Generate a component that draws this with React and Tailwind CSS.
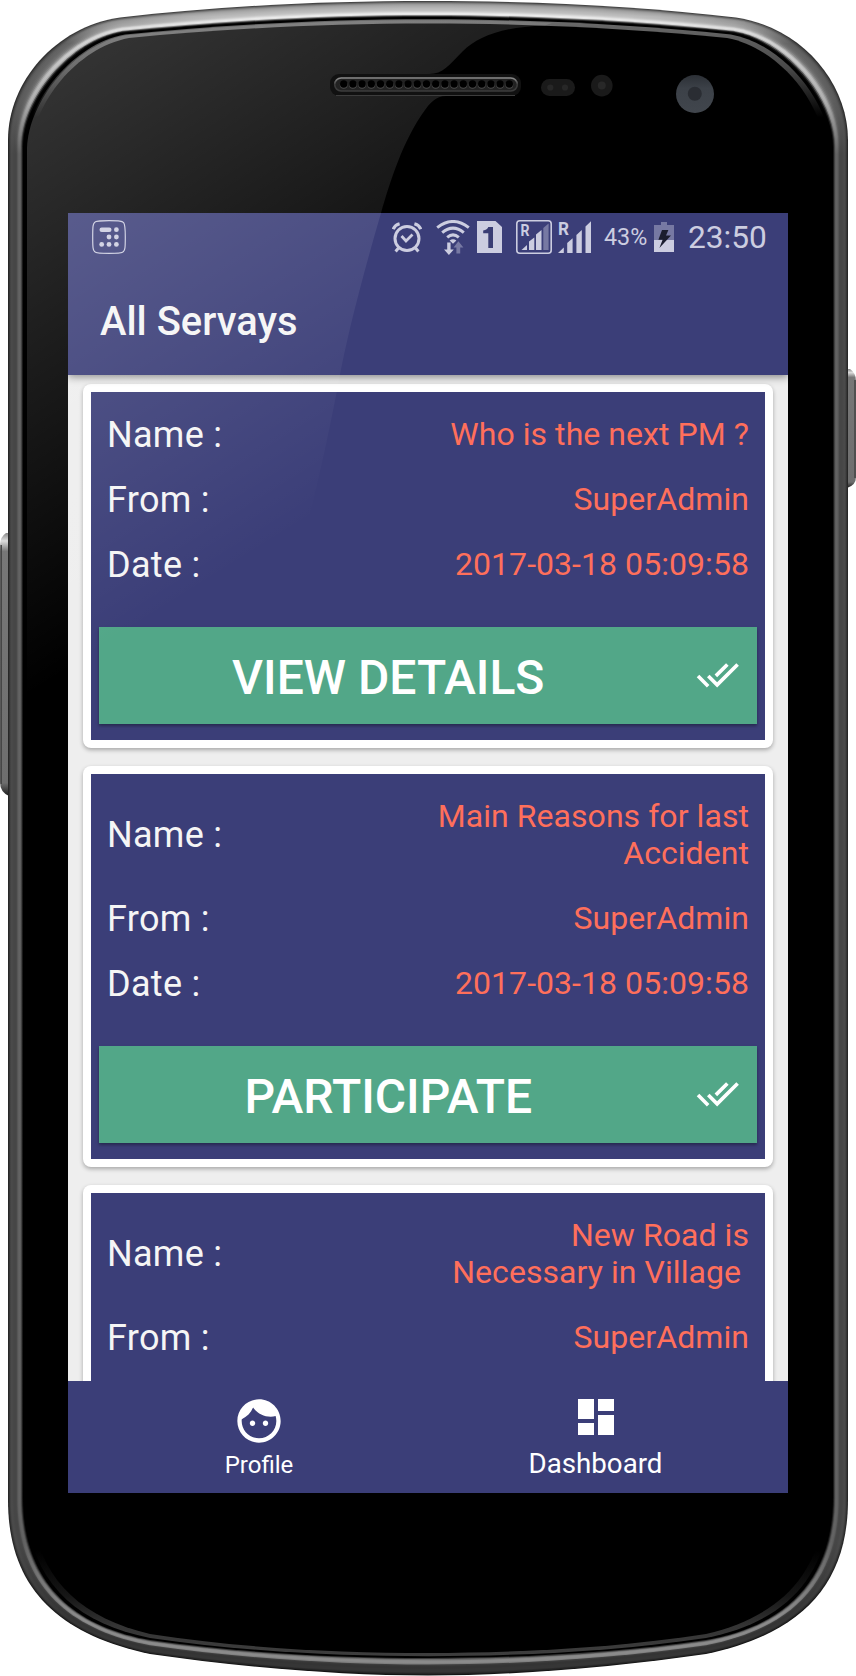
import React from "react";

// Rim and glass outlines, left half only: top start + curves, then bottom start + curves.
const OUTER = [8, 140, 8, 82, 55, 27, 120, 17.5, 220, 6, 320, 1, 428, 1, 8, 1500, 8, 1585, 55, 1634, 150, 1654, 240, 1667, 340, 1675.5, 428, 1675.5];
const INNER = [23, 147, 23, 100, 72, 41, 123, 32.5, 220, 23, 320, 17, 428, 17, 23, 1497, 23, 1580, 70, 1626, 150, 1640, 240, 1653, 340, 1658, 428, 1658];
const GLASS = [31, 150, 33, 104, 76, 48, 129, 38, 222, 29, 322, 23.5, 428, 23.5, 31, 1497, 33, 1572, 74, 1616, 150, 1634, 240, 1648, 340, 1653, 428, 1653];

function mix(a, b, t) {
  return a.map((v, i) => v + (b[i] - v) * t);
}

function outline(p) {
  const m = (i) => `${856 - p[i]} ${p[i + 1]}`;
  const q = (i) => `${p[i]} ${p[i + 1]}`;
  return [
    `M${q(0)} C${q(2)} ${q(4)} ${q(6)} C${q(8)} ${q(10)} ${q(12)}`,
    `C${m(10)} ${m(8)} ${m(6)} C${m(4)} ${m(2)} ${m(0)}`,
    `L${m(14)} C${m(16)} ${m(18)} ${m(20)} C${m(22)} ${m(24)} ${m(26)}`,
    `C${q(24)} ${q(22)} ${q(20)} C${q(18)} ${q(16)} ${q(14)} Z`,
  ].join(" ");
}

// Grey levels across the rim, from outside in: [top, corner, sides, bottom]
const RIM = [
  [70, 50, 38, 20],
  [105, 72, 52, 36],
  [135, 88, 66, 46],
  [155, 96, 74, 54],
  [165, 100, 74, 54],
  [172, 102, 72, 54],
  [178, 106, 70, 52],
  [184, 112, 70, 52],
  [188, 122, 70, 54],
  [194, 142, 76, 62],
  [206, 175, 92, 126],
  [222, 205, 98, 138],
  [236, 210, 100, 140],
  [228, 190, 92, 136],
  [130, 100, 62, 110],
  [40, 24, 24, 60],
  [0, 0, 0, 0],
];
const grey = (v) => `rgb(${v},${v},${v})`;

function DeviceBody() {
  return (
    <svg className="absolute inset-0" width="856" height="1676" viewBox="0 0 856 1676" aria-hidden="true">
      <defs>
        {RIM.map(([t, c, s, b], i) => (
          <linearGradient key={i} id={`rim${i}`} gradientUnits="userSpaceOnUse" x1="0" y1="0" x2="0" y2="1676">
            <stop offset="0.01" stopColor={grey(t)} />
            <stop offset="0.026" stopColor={grey(c)} />
            <stop offset="0.06" stopColor={grey(Math.round(c * 0.7 + s * 0.3))} />
            <stop offset="0.092" stopColor={grey(s)} />
            <stop offset="0.92" stopColor={grey(s)} />
            <stop offset="0.965" stopColor={grey(b)} />
          </linearGradient>
        ))}
        <linearGradient id="ring" gradientUnits="userSpaceOnUse" x1="0" y1="0" x2="0" y2="1676">
          <stop offset="0.012" stopColor="#6a6a6a" />
          <stop offset="0.04" stopColor="#4a4a4a" />
          <stop offset="0.07" stopColor="#000" />
          <stop offset="0.925" stopColor="#000" />
          <stop offset="0.952" stopColor="#161616" />
          <stop offset="0.97" stopColor="#343434" />
          <stop offset="1" stopColor="#444" />
        </linearGradient>
        <linearGradient id="key" x1="0" y1="0" x2="0" y2="1">
          <stop offset="0" stopColor="#8a8a8a" />
          <stop offset="0.03" stopColor="#dcdcdc" />
          <stop offset="0.07" stopColor="#777" />
          <stop offset="0.95" stopColor="#6e6e6e" />
          <stop offset="1" stopColor="#1c1c1c" />
        </linearGradient>
      </defs>

      <path d="M9 533 L6 533 Q0 537 0 545 V782 Q0 792 9 796 Z" fill="url(#key)" />
      <path d="M1.2 545 V784" stroke="#444" strokeWidth="1.5" />
      <path d="M847 369 L850 369 Q856 373 856 381 V477 Q856 485 847 488 Z" fill="url(#key)" />
      <path d="M855 380 V478" stroke="#444" strokeWidth="1.5" />

      {RIM.map((_, i) => (
        <path key={i} d={outline(mix(OUTER, INNER, i / (RIM.length - 1)))} fill={`url(#rim${i})`} />
      ))}
      <path d={outline(mix(INNER, GLASS, 0.35))} fill="url(#ring)" />
      <path d={outline(GLASS)} fill="#000" />
    </svg>
  );
}

function Gloss() {
  const holes = Array.from({ length: 19 }, (_, i) => 343.7 + i * 9.2);
  return (
    <svg className="pointer-events-none absolute inset-0" width="856" height="1676" viewBox="0 0 856 1676" aria-hidden="true">
      <defs>
        <linearGradient id="gloss" gradientUnits="userSpaceOnUse" x1="0" y1="94" x2="279" y2="541">
          <stop offset="0" stopColor="#fff" stopOpacity="0.205" />
          <stop offset="1" stopColor="#fff" stopOpacity="0" />
        </linearGradient>
        <clipPath id="glassClip">
          <path d={outline(mix(INNER, GLASS, 0.5))} />
        </clipPath>
        <linearGradient id="slotEdge" x1="0" y1="0" x2="0" y2="1">
          <stop offset="0" stopColor="#8c8c8c" />
          <stop offset="0.5" stopColor="#3a3a3a" />
          <stop offset="1" stopColor="#3c3c3c" />
        </linearGradient>
        <linearGradient id="lens" x1="0" y1="0" x2="0" y2="1">
          <stop offset="0" stopColor="#2c3036" />
          <stop offset="0.35" stopColor="#3c4148" />
          <stop offset="1" stopColor="#41464d" />
        </linearGradient>
      </defs>
      <g clipPath="url(#glassClip)">
        <path
          d="M26 20 H560 L545 25.5 C500 27 478 37 463 51 C449 65 443 74 429 74 L446 96 C436 96 429 104 425 110 C403 140 390 182 381 213 C363 275 347 335 338 385 C322 470 300 560 280 620 L26 900 Z"
          fill="url(#gloss)"
        />
      </g>

      <rect x="330" y="74" width="191" height="22" rx="9" fill="#111" />
      <path d="M336 95.5 H515" stroke="#3c3c3c" strokeWidth="1.2" />
      <rect x="334.7" y="78" width="182.6" height="13" rx="6.5" fill="#222" stroke="url(#slotEdge)" strokeWidth="1.6" />
      {holes.map((x) => (
        <g key={x}>
          <circle cx={x} cy="84.8" r="3.9" fill="#4b4b4b" />
          <circle cx={x} cy="84" r="3.7" fill="#000" />
        </g>
      ))}

      <rect x="541" y="79" width="34" height="17" rx="8.5" fill="#1a1a1a" />
      <circle cx="550.3" cy="87.5" r="3.1" fill="#272727" />
      <circle cx="565" cy="87.5" r="3.1" fill="#272727" />
      <circle cx="601.8" cy="85.6" r="10.8" fill="#1a1a1a" />
      <circle cx="601.8" cy="85.6" r="4" fill="#282828" />
      <circle cx="695" cy="94" r="19" fill="url(#lens)" />
      <circle cx="694.8" cy="93.8" r="7" fill="#2a2d33" />
    </svg>
  );
}

const TINT = "#cccde0";
const FAINT = "#7779a3";

function LauncherIcon() {
  return (
    <svg width="34" height="34" viewBox="0 0 34 34" fill={TINT}>
      <path d="M17 .7 C28 .7 30 1 31.6 2.6 C33 4.2 33.3 7 33.3 17 C33.3 28 33 30 31.4 31.6 C30 33 28 33.3 17 33.3 C6 33.3 4 33 2.6 31.6 C1 30 .7 28 .7 17 C.7 6 1 4 2.6 2.4 C4 1 6 .7 17 .7 Z" fill="none" stroke={TINT} strokeWidth="1.2" />
      <rect x="7.5" y="7.5" width="12" height="4.4" rx="2.2" />
      <circle cx="24.4" cy="9.7" r="2.4" />
      <circle cx="17" cy="17" r="2.4" />
      <circle cx="24.4" cy="17" r="2.4" />
      <circle cx="9.7" cy="24.4" r="2.4" />
      <circle cx="17" cy="24.4" r="2.4" />
      <circle cx="24.4" cy="24.4" r="2.4" />
    </svg>
  );
}

function AlarmIcon() {
  return (
    <svg width="30" height="31" viewBox="0 0 30 31" fill="none" stroke={TINT}>
      <circle cx="15" cy="16.5" r="12" strokeWidth="3" />
      <path d="M9.5 14 L14 19 L20.5 12.5" strokeWidth="2.8" />
      <path d="M6.5 26 L3.6 29.5 M23.5 26 L26.4 29.5" strokeWidth="3" />
      <path d="M1.2 7.2 Q3 3 7.6 1.8 M28.8 7.2 Q27 3 22.4 1.8" strokeWidth="3.2" />
    </svg>
  );
}

function WifiIcon() {
  return (
    <svg width="34" height="35" viewBox="0 0 34 35" fill="none" stroke={TINT}>
      <path d="M1.2 7.6 Q17 -4.6 32.8 7.6" strokeWidth="3" />
      <path d="M6.2 12.6 Q17 3.6 27.8 12.6" strokeWidth="3" />
      <path d="M11.2 17.4 Q17 12.4 22.8 17.4" strokeWidth="3" />
      <path d="M13.6 20.6 Q17 17.8 20.4 20.6 L17 23.8 Z" fill={TINT} stroke="none" />
      <path d="M11.2 22.6 H14.6 V29.6 H17.8 L12.9 35 L8 29.6 H11.2 Z" fill={TINT} stroke="none" />
      <path d="M20.4 33.5 V27.4 H17.6 L22.4 21.2 L27.4 27.4 H24.2 V33.5 Z" fill={FAINT} stroke="none" />
    </svg>
  );
}

function SimIcon() {
  return (
    <svg width="25" height="32" viewBox="0 0 25 32">
      <path d="M0 0 H18.5 L25 6 V32 H0 Z" fill={TINT} />
      <path d="M11.3 6 H16 V27 H11.3 V12.2 H6.2 V9.4 Q10.4 9 11.3 6 Z" fill="#3a3d74" />
    </svg>
  );
}

function BoxedSignal() {
  return (
    <svg width="36" height="34" viewBox="0 0 36 34" fill={TINT}>
      <rect x="0.8" y="0.8" width="34.4" height="32.4" rx="3" fill="none" stroke={TINT} strokeWidth="1.6" />
      <path d="M5.5 30 L11 25 V30 Z" />
      <path d="M13 30 V21.5 L18.3 17.5 V30 Z" />
      <path d="M20 30 V14.5 L25.5 10 V30 Z" />
      <path d="M27.3 30 V8 L32.6 3.6 V30 Z" fill={FAINT} />
      <text x="4.5" y="15.6" fontFamily="Roboto" fontWeight="700" fontSize="16" textLength="9" lengthAdjust="spacingAndGlyphs">R</text>
    </svg>
  );
}

function OpenSignal() {
  return (
    <svg className="overflow-visible" width="33" height="32" viewBox="0 0 33 32" fill={TINT}>
      <path d="M0 32 L5.8 26.4 V32 Z" />
      <path d="M9.2 32 V22 L14.6 17.2 V32 Z" />
      <path d="M18.4 32 V14 L23.8 9 V32 Z" />
      <path d="M27.5 32 V5.6 L33 0.2 V32 Z" />
      <text x="0" y="13.5" fontFamily="Roboto" fontWeight="700" fontSize="18" textLength="11" lengthAdjust="spacingAndGlyphs">R</text>
    </svg>
  );
}

function BatteryIcon() {
  return (
    <svg width="20" height="30" viewBox="0 0 20 30">
      <path d="M0 3 H7 V0 H13 V3 H20 V30 H0 Z" fill={FAINT} />
      <rect x="0" y="18" width="20" height="12" fill={TINT} />
      <path d="M8 8 H14.4 L12 13.6 H17 L5.4 26 L8.6 17.8 H4.4 Z" fill="#1b1d2e" />
    </svg>
  );
}

function StatusBar() {
  return (
    <div className="flex h-12 items-center pl-6 text-[#cccde0]">
      <LauncherIcon />
      <div className="ml-[266px]"><AlarmIcon /></div>
      <div className="ml-[14px]"><WifiIcon /></div>
      <div className="ml-[7px]"><SimIcon /></div>
      <div className="ml-[14px]"><BoxedSignal /></div>
      <div className="ml-[6px]"><OpenSignal /></div>
      <span className="ml-[13px] w-11 pt-0.5 text-[23.3px] leading-none whitespace-nowrap">43%</span>
      <div className="ml-[6px]"><BatteryIcon /></div>
      <span className="ml-[14px] pt-0.5 text-[31.7px] leading-none whitespace-nowrap">23:50</span>
    </div>
  );
}

function DoneAllIcon() {
  return (
    <svg className="mb-px" width="43.5" height="43.5" viewBox="0 0 24 24" fill="currentColor">
      <path d="M18 7l-1.41-1.41-6.34 6.34 1.41 1.41L18 7zm4.24-1.41L11.66 16.17 7.48 12l-1.41 1.41L11.66 19l12-12-1.42-1.41zM.41 13.41L6 19l1.41-1.41L1.83 12 .41 13.41z" />
    </svg>
  );
}

function Row({ label, lines }) {
  return (
    <div className="flex items-center justify-between py-[13.5px]">
      <span className="text-4xl leading-[38px] tracking-[0.3px] text-[#f5f5f5]">{label} :</span>
      <span className="text-right text-[32px] leading-[37.5px] tracking-[0.06px] text-[#ff6f5b]">
        {lines.map((line) => (
          <span key={line} className="block whitespace-pre">{line}</span>
        ))}
      </span>
    </div>
  );
}

function SurveyCard({ name, from, date, action }) {
  return (
    <article className="shrink-0 rounded-lg bg-white p-2 shadow-[0_2px_4px_rgba(0,0,0,0.3)]">
      <div className="bg-[#3b3e78] px-2 pt-[10px] pb-4">
        <div className="px-2">
          <Row label="Name" lines={name} />
          <Row label="From" lines={[from]} />
          <Row label="Date" lines={[date]} />
        </div>
        <button className="mt-[30px] flex h-[97px] w-full items-center bg-[#52a788] pr-[18px] text-white shadow-[0_2px_3px_rgba(0,0,0,0.35)]">
          <span className="flex-1 pt-[5px] pr-[18px] text-center text-5xl font-medium">{action}</span>
          <DoneAllIcon />
        </button>
      </div>
    </article>
  );
}

function BottomNav() {
  return (
    <nav className="flex h-28 shrink-0 bg-[#3b3e78] pr-6 pl-[22px] text-white">
      <div className="flex flex-1 flex-col items-center pt-[14px]">
        <svg width="52" height="52" viewBox="0 0 24 24" fill="currentColor">
          <path d="M9 11.75c-.69 0-1.25.56-1.25 1.25s.56 1.25 1.25 1.25 1.25-.56 1.25-1.25-.56-1.25-1.25-1.25zm6 0c-.69 0-1.25.56-1.25 1.25s.56 1.25 1.25 1.25 1.25-.56 1.25-1.25-.56-1.25-1.25-1.25zM12 2C6.48 2 2 6.48 2 12s4.48 10 10 10 10-4.48 10-10S17.52 2 12 2zm0 18c-4.41 0-8-3.59-8-8 0-.29.02-.58.05-.86 2.36-1.05 4.23-2.98 5.21-5.37C11.07 8.33 14.05 10 17.42 10c.78 0 1.53-.09 2.25-.26.21.71.33 1.47.33 2.26 0 4.41-3.59 8-8 8z" />
        </svg>
        <span className="mt-1 pl-px text-2xl leading-7">Profile</span>
      </div>
      <div className="flex flex-1 flex-col items-center pt-3">
        <svg width="48" height="48" viewBox="0 0 24 24" fill="currentColor">
          <path d="M3 13h8V3H3v10zm0 8h8v-6H3v6zm10 0h8V11h-8v10zm0-18v6h8V3h-8z" />
        </svg>
        <span className="mt-[7px] text-[27.7px] leading-8">Dashboard</span>
      </div>
    </nav>
  );
}

const SURVEYS = [
  { name: ["Who is the next PM ?"], action: "VIEW DETAILS" },
  { name: ["Main Reasons for last", "Accident"], action: "PARTICIPATE" },
  { name: ["New Road is", "Necessary in Village "], action: "PARTICIPATE" },
];

export default function App() {
  return (
    <div className="relative h-[1676px] w-[856px] overflow-hidden bg-white pt-[213px] pl-[68px] font-['Roboto',sans-serif]">
      <DeviceBody />
      <main className="relative isolate flex h-[1280px] w-[720px] flex-col overflow-hidden bg-[#eee]">
        <header className="relative z-10 h-[162px] shrink-0 bg-[#3b3e78] shadow-[0_2px_8px_rgba(0,0,0,0.45)]">
          <StatusBar />
          <h1 className="pt-[37px] pl-8 text-[39.9px] leading-[48px] font-medium text-[#f5f5f5]">All Servays</h1>
        </header>
        <section className="flex min-h-0 flex-1 flex-col gap-[18px] overflow-hidden px-[15px] pt-[9px]">
          {SURVEYS.map((s) => (
            <SurveyCard key={s.name[0]} name={s.name} from="SuperAdmin" date="2017-03-18 05:09:58" action={s.action} />
          ))}
        </section>
        <BottomNav />
      </main>
      <Gloss />
    </div>
  );
}
